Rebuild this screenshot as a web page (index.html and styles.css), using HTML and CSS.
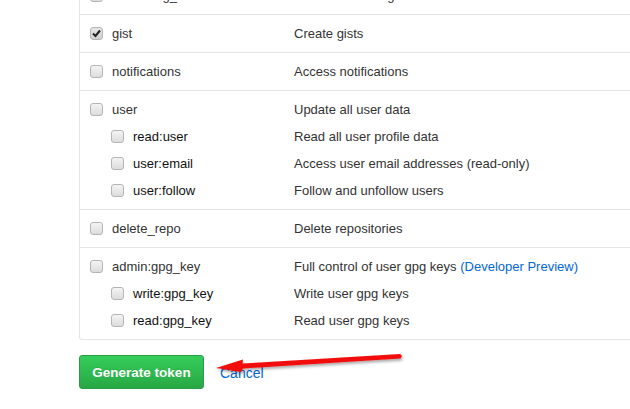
FILE: index.html
```html
<!DOCTYPE html>
<html>
<head>
<meta charset="utf-8">
<link rel="stylesheet" href="styles.css">
</head>
<body>
<div class="page">
  <div class="scopes">
    <div class="scope">
      <div class="line"><span class="name"><span class="cb"></span>admin:org_hook</span><span class="desc">Full control of organization hooks</span></div>
    </div>
    <div class="scope">
      <div class="line"><span class="name"><span class="cb checked"><svg viewBox="0 0 13 13" width="13" height="13"><path d="M3 6.5 L5.5 9 L10 3.5" fill="none" stroke="#222" stroke-width="2"/></svg></span>gist</span><span class="desc">Create gists</span></div>
    </div>
    <div class="scope">
      <div class="line"><span class="name"><span class="cb"></span>notifications</span><span class="desc">Access notifications</span></div>
    </div>
    <div class="scope">
      <div class="line"><span class="name"><span class="cb"></span>user</span><span class="desc">Update all user data</span></div>
      <div class="line sub"><span class="name"><span class="cb"></span>read:user</span><span class="desc">Read all user profile data</span></div>
      <div class="line sub"><span class="name"><span class="cb"></span>user:email</span><span class="desc">Access user email addresses (read-only)</span></div>
      <div class="line sub"><span class="name"><span class="cb"></span>user:follow</span><span class="desc">Follow and unfollow users</span></div>
    </div>
    <div class="scope">
      <div class="line"><span class="name"><span class="cb"></span>delete_repo</span><span class="desc">Delete repositories</span></div>
    </div>
    <div class="scope">
      <div class="line"><span class="name"><span class="cb"></span>admin:gpg_key</span><span class="desc">Full control of user gpg keys <a class="link">(Developer Preview)</a></span></div>
      <div class="line sub"><span class="name"><span class="cb"></span>write:gpg_key</span><span class="desc">Write user gpg keys</span></div>
      <div class="line sub"><span class="name"><span class="cb"></span>read:gpg_key</span><span class="desc">Read user gpg keys</span></div>
    </div>
  </div>
  <div class="actions">
    <button class="btn">Generate token</button>
    <a class="link cancel">Cancel</a>
  </div>
</div>
<svg class="arrow" width="630" height="409" viewBox="0 0 630 409">
  <defs>
    <filter id="sh" x="-20%" y="-100%" width="140%" height="300%">
      <feDropShadow dx="1" dy="2" stdDeviation="1.5" flood-color="#000" flood-opacity="0.35"/>
    </filter>
  </defs>
  <polygon filter="url(#sh)" fill="#f20d0d" points="216,368 243,359.5 242.5,363.5 400,354 402,356 400.5,358.5 243,368.5 241,372"/>
</svg>
</body>
</html>
```
FILE: styles.css
```css
html, body {
  margin: 0;
  padding: 0;
  background: #fff;
  overflow: hidden;
}
body {
  font-family: "Liberation Sans", Arial, sans-serif;
  font-size: 13px;
  color: #333;
  width: 630px;
  height: 409px;
  position: relative;
}
.page {
  padding-left: 79px;
  margin-top: -24px;
}
.scopes {
  width: 620px;
  border: 1px solid #e5e5e5;
  border-top: none;
  border-radius: 0 0 3px 3px;
}
.scope {
  border-top: 1px solid #e5e5e5;
  padding: 9px 0 10px 10px;
}
.line {
  display: flex;
  align-items: center;
  height: 18px;
}
.line.sub {
  margin-top: 9px;
}
.name {
  display: flex;
  align-items: center;
  gap: 9px;
  width: 204px;
  color: #333;
}
.sub .name {
  padding-left: 21px;
  width: 183px;
  color: #111;
}
.desc {
  color: #333;
}
.cb {
  display: block;
  width: 11px;
  height: 11px;
  border: 1px solid #b5b5b5;
  border-radius: 3px;
  background: linear-gradient(#f4f4f4, #dcdcdc);
  position: relative;
  flex: none;
}
.cb svg {
  position: absolute;
  left: -1px;
  top: -1px;
}
.cb.checked {
  background: linear-gradient(#e6e6e6, #cfcfcf);
}
.link {
  color: #0366d6;
  text-decoration: none;
}
.actions {
  display: flex;
  align-items: center;
  margin-top: 15px;
  gap: 16px;
}
.btn {
  font-family: "Liberation Sans", Arial, sans-serif;
  font-size: 13.5px;
  font-weight: bold;
  color: #fff;
  width: 125px;
  height: 34px;
  padding: 0;
  border: 1px solid #2a9c45;
  border-radius: 3px;
  background: linear-gradient(#35cd5a, #28a745);
  text-shadow: 0 -1px 0 rgba(0,0,0,0.1);
}
.cancel {
  font-size: 14px;
  padding-top: 2px;
}
.arrow {
  position: absolute;
  left: 0;
  top: 0;
  pointer-events: none;
}
```
